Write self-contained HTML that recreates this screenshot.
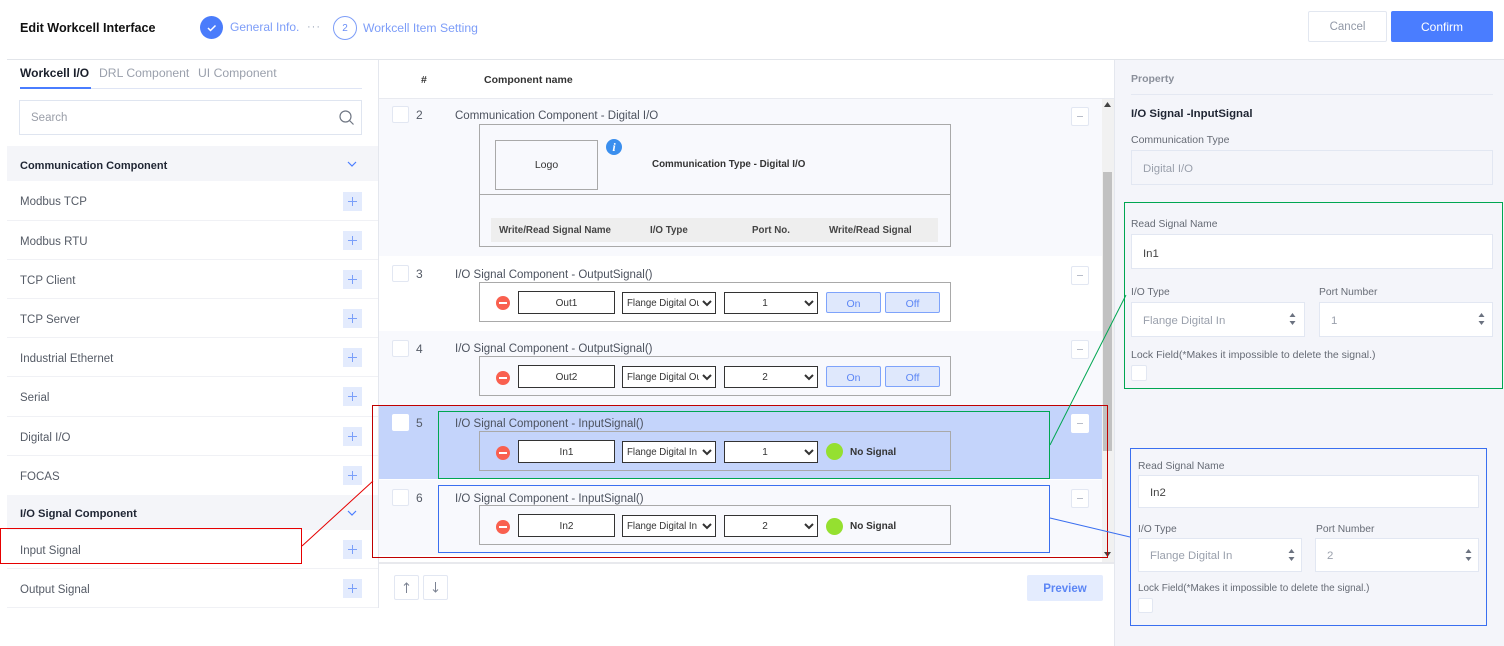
<!DOCTYPE html>
<html><head><meta charset="utf-8"><style>
html,body{margin:0;padding:0;background:#fff}
body{position:relative;width:1504px;height:646px;overflow:hidden;font-family:"Liberation Sans","Noto Sans CJK KR",sans-serif;font-size:11.5px;color:#555b66}
div,select,svg{position:absolute;box-sizing:border-box}
.t{height:16px;line-height:16px;white-space:nowrap}
.b{font-weight:bold;color:#1f2533}
.plus{left:343px;width:19px;height:19px;background:#e3ebfd}
.plus:before{content:"";position:absolute;left:5px;top:9px;width:9px;height:1px;background:#7a9ffa}
.plus:after{content:"";position:absolute;left:9px;top:5px;width:1px;height:9px;background:#7a9ffa}
.ln{left:7px;width:371px;height:1px;background:#f0f1f5}
.li{left:20px;color:#555b66;margin-top:1px}
.cb{left:392px;width:17px;height:17px;background:#fff;border:1px solid #e2e7f2;border-radius:2px}
.mn{left:1071px;width:18px;height:19px;background:#fff;border:1px solid #e2e7f2;border-radius:2px}
.mn:after{content:"";position:absolute;left:5px;top:8px;width:6px;height:1px;background:#b8bdc9}
.num{left:416px;font-size:12px}
.rt{left:455px;color:#4c525e;margin-top:1px}
.box{left:479px;width:472px;height:40px;border:1px solid #a9a9a9}
.red{left:496px;width:14px;height:14px;border-radius:50%;background:#f9604f}
.red:after{content:"";position:absolute;left:3px;top:6px;width:8px;height:2px;background:#fff}
.in{left:518px;width:97px;height:23px;border:1px solid #333;background:#fff;text-align:center;line-height:24px;font-size:10px;color:#333}
select{height:22px;background:#fff;border:1px solid #333;border-radius:0;font-family:"Liberation Sans",sans-serif;font-size:9.7px;color:#333;padding:0}
.s1{left:622px;width:94px}
.s2{left:724px;width:94px;font-size:10px;text-align:center;text-align-last:center}
.on{width:55px;height:21px;background:#dfe8fc;border:1px solid #7ea3fb;border-radius:2px;color:#5c86f5;text-align:center;line-height:22px;font-size:10.5px}
.dot{left:826px;width:17px;height:17px;border-radius:50%;background:#95e030}
.ns{left:850px;font-size:10px;font-weight:bold;color:#333}
.lab{color:#666b75;font-size:10.3px;margin-top:1px}
.lk{color:#666b75;font-size:10.5px}
.field{background:#fff;border:1px solid #e2e7f2;line-height:37px;padding-left:11px;color:#9aa0ac;font-size:11.4px}
.sp{width:7px;height:12px}
.hd{font-size:10.5px;font-weight:bold;color:#333}
.th{font-size:9.75px;font-weight:bold;color:#444}
</style></head><body>

<div class="t b" style="left:20px;top:20px;font-size:12.6px;color:#111">Edit Workcell Interface</div>
<div style="left:200px;top:16px;width:23px;height:23px;border-radius:50%;background:#4a7cfb"></div>
<svg style="left:200px;top:16px" width="23" height="23"><path d="M8 12l2.500 2.500L15.500 9.500" fill="none" stroke="#fff" stroke-width="1.500"/></svg>
<div class="t" style="left:230px;top:19px;font-size:12px;color:#7d9df8">General Info.</div>
<div class="t" style="left:307px;top:19px;font-size:11px;color:#9aa5b8;letter-spacing:1px">···</div>
<div style="left:333px;top:16px;width:24px;height:24px;border-radius:50%;border:1px solid #7d9df8;color:#6a8ef7;text-align:center;line-height:23px;font-size:10px">2</div>
<div class="t" style="left:363px;top:20px;font-size:12.2px;color:#7d9df8">Workcell Item Setting</div>
<div style="left:1308px;top:11px;width:79px;height:31px;border:1px solid #e2e7f0;border-radius:2px;background:#fff;color:#9198a6;text-align:center;line-height:31px;font-size:11.5px">Cancel</div>
<div style="left:1391px;top:11px;width:102px;height:31px;border-radius:2px;background:#4a7dff;color:#fff;text-align:center;line-height:33px;font-size:12px">Confirm</div>
<div style="left:7px;top:59px;width:1497px;height:1px;background:#e2e5ea"></div>

<div class="t b" style="left:20px;top:65px;color:#1a1f2b;font-size:12px">Workcell I/O</div>
<div class="t" style="left:99px;top:65px;color:#9aa0ac;font-size:12.2px">DRL Component</div>
<div class="t" style="left:198px;top:65px;color:#9aa0ac;font-size:12.2px">UI Component</div>
<div style="left:20px;top:88px;width:342px;height:1px;background:#dfe5f5"></div>
<div style="left:20px;top:87px;width:71px;height:2px;background:#4a7dff"></div>
<div style="left:19px;top:100px;width:343px;height:35px;border:1px solid #dfe5f0"></div>
<div class="t" style="left:31px;top:110px;color:#9a9ea8">Search</div>
<svg style="left:338px;top:109px" width="17" height="17"><circle cx="7.500" cy="7.500" r="5.500" fill="none" stroke="#707784" stroke-width="1.200"/><path d="M11.500 11.500l4 4" stroke="#707784" stroke-width="1.200"/></svg>

<div style="left:7px;top:146px;width:371px;height:35px;background:#f4f5f9"></div>
<div class="t b" style="left:20px;top:158px;font-size:11px">Communication Component</div>
<svg style="left:347px;top:161px" width="10" height="7"><path d="M1 1l4 4 4-4" fill="none" stroke="#4a7dff" stroke-width="1.200"/></svg>

<div class="t li" style="top:193px">Modbus TCP</div><div class="plus" style="top:192px"></div><div class="ln" style="top:220px"></div>
<div class="t li" style="top:233px">Modbus RTU</div><div class="plus" style="top:231px"></div><div class="ln" style="top:259px"></div>
<div class="t li" style="top:272px">TCP Client</div><div class="plus" style="top:270px"></div><div class="ln" style="top:298px"></div>
<div class="t li" style="top:311px">TCP Server</div><div class="plus" style="top:309px"></div><div class="ln" style="top:337px"></div>
<div class="t li" style="top:350px">Industrial Ethernet</div><div class="plus" style="top:348px"></div><div class="ln" style="top:376px"></div>
<div class="t li" style="top:389px">Serial</div><div class="plus" style="top:387px"></div><div class="ln" style="top:416px"></div>
<div class="t li" style="top:429px">Digital I/O</div><div class="plus" style="top:427px"></div><div class="ln" style="top:455px"></div>
<div class="t li" style="top:468px">FOCAS</div><div class="plus" style="top:466px"></div>

<div style="left:7px;top:495px;width:371px;height:35px;background:#f4f5f9"></div>
<div class="t b" style="left:20px;top:506px;font-size:11.2px">I/O Signal Component</div>
<svg style="left:347px;top:510px" width="10" height="7"><path d="M1 1l4 4 4-4" fill="none" stroke="#4a7dff" stroke-width="1.200"/></svg>
<div class="t li" style="top:542px">Input Signal</div><div class="plus" style="top:540px"></div><div class="ln" style="top:568px"></div>
<div class="t li" style="top:581px">Output Signal</div><div class="plus" style="top:579px"></div><div class="ln" style="top:607px"></div>
<div style="left:378px;top:60px;width:1px;height:548px;background:#e4e7ee"></div>

<div class="t hd" style="left:421px;top:72px">#</div>
<div class="t hd" style="left:484px;top:72px">Component name</div>
<div style="left:379px;top:98px;width:735px;height:1px;background:#e8eaf0"></div>

<div style="left:379px;top:99px;width:723px;height:157px;background:#f8f9fd"></div>
<div style="left:379px;top:331px;width:723px;height:75px;background:#f8f9fd"></div>
<div style="left:379px;top:406px;width:723px;height:73px;background:#c4d4fb"></div>
<div style="left:379px;top:480px;width:723px;height:75px;background:#f8f9fd"></div>
<div style="left:1102px;top:99px;width:12px;height:463px;background:#f1f1f1"></div>
<div style="left:1103px;top:172px;width:9px;height:279px;background:#c1c1c1"></div>
<svg style="left:1104px;top:102px" width="7" height="5"><path d="M0 5l3.500-5L7 5z" fill="#444"/></svg>
<svg style="left:1104px;top:552px" width="7" height="5"><path d="M0 0l3.500 5L7 0z" fill="#444"/></svg>
<div style="left:379px;top:562px;width:735px;height:2px;background:#e8e9ed"></div>

<div class="cb" style="top:106px"></div><div class="t num" style="top:107px">2</div>
<div class="t rt" style="top:107px">Communication Component - Digital I/O</div><div class="mn" style="top:107px"></div>
<div style="left:479px;top:124px;width:472px;height:123px;border:1px solid #a9a9a9"></div>
<div style="left:480px;top:194px;width:470px;height:1px;background:#a9a9a9"></div>
<div style="left:495px;top:140px;width:103px;height:50px;border:1px solid #a9a9a9;text-align:center;line-height:49px;font-size:10.5px;color:#333">Logo</div>
<div style="left:606px;top:139px;width:16px;height:16px;border-radius:50%;background:#3b8fee;color:#fff;text-align:center;font:italic bold 12px/16px 'Liberation Serif',serif">i</div>
<div class="t" style="left:652px;top:157px;font-size:9.8px;font-weight:bold;color:#333">Communication Type - Digital I/O</div>
<div style="left:491px;top:218px;width:447px;height:24px;background:#eeeeee"></div>
<div class="t th" style="left:499px;top:223px">Write/Read Signal Name</div>
<div class="t th" style="left:650px;top:223px">I/O Type</div>
<div class="t th" style="left:752px;top:223px">Port No.</div>
<div class="t th" style="left:829px;top:223px">Write/Read Signal</div>

<div class="cb" style="top:265px"></div><div class="t num" style="top:266px">3</div>
<div class="t rt" style="top:266px">I/O Signal Component - OutputSignal()</div><div class="mn" style="top:266px"></div>
<div class="box" style="top:282px"></div><div class="red" style="top:296px"></div>
<div class="in" style="top:291px">Out1</div>
<select class="s1" style="top:292px"><option>Flange Digital Out</option></select>
<select class="s2" style="top:292px"><option>1</option></select>
<div class="on" style="left:826px;top:292px">On</div><div class="on" style="left:885px;top:292px">Off</div>

<div class="cb" style="top:340px"></div><div class="t num" style="top:341px">4</div>
<div class="t rt" style="top:340px">I/O Signal Component - OutputSignal()</div><div class="mn" style="top:340px"></div>
<div class="box" style="top:356px"></div><div class="red" style="top:371px"></div>
<div class="in" style="top:365px">Out2</div>
<select class="s1" style="top:366px"><option>Flange Digital Out</option></select>
<select class="s2" style="top:366px"><option>2</option></select>
<div class="on" style="left:826px;top:366px">On</div><div class="on" style="left:885px;top:366px">Off</div>

<div class="cb" style="top:414px;border-color:#fff"></div><div class="t num" style="top:415px">5</div>
<div class="t rt" style="top:415px">I/O Signal Component - InputSignal()</div><div class="mn" style="top:414px;border-color:#fff"></div>
<div class="box" style="top:431px"></div><div class="red" style="top:446px"></div>
<div class="in" style="top:440px">In1</div>
<select class="s1" style="top:441px"><option>Flange Digital In I</option></select>
<select class="s2" style="top:441px"><option>1</option></select>
<div class="dot" style="top:443px"></div><div class="t ns" style="top:445px">No Signal</div>

<div class="cb" style="top:489px"></div><div class="t num" style="top:490px">6</div>
<div class="t rt" style="top:490px">I/O Signal Component - InputSignal()</div><div class="mn" style="top:489px"></div>
<div class="box" style="top:505px"></div><div class="red" style="top:520px"></div>
<div class="in" style="top:514px">In2</div>
<select class="s1" style="top:515px"><option>Flange Digital In I</option></select>
<select class="s2" style="top:515px"><option>2</option></select>
<div class="dot" style="top:518px"></div><div class="t ns" style="top:519px">No Signal</div>

<div style="left:394px;top:575px;width:25px;height:25px;border:1px solid #e2e7f2;border-radius:2px"></div>
<svg style="left:402px;top:582px" width="9" height="11"><path d="M4.500 11V1M2 3.500l2.500-2.500 2.500 2.500" fill="none" stroke="#7b8292" stroke-width="1"/></svg>
<div style="left:423px;top:575px;width:25px;height:25px;border:1px solid #e2e7f2;border-radius:2px"></div>
<svg style="left:431px;top:582px" width="9" height="11"><path d="M4.500 0V10M2 7.500l2.500 2.500 2.500-2.500" fill="none" stroke="#7b8292" stroke-width="1"/></svg>
<div style="left:1027px;top:575px;width:76px;height:26px;background:#e4ecfe;border-radius:2px;color:#5c86f5;font-weight:bold;text-align:center;line-height:28px;font-size:11.5px">Preview</div>

<div style="left:1114px;top:60px;width:390px;height:586px;background:#f4f5fa;border-left:1px solid #e4e7ee"></div>
<div class="t" style="left:1131px;top:71px;font-size:10.5px;font-weight:bold;color:#8a8f9a">Property</div>
<div style="left:1131px;top:94px;width:362px;height:1px;background:#e4e8f2"></div>
<div class="t b" style="left:1131px;top:106px;font-size:11.4px">I/O Signal -InputSignal</div>
<div class="t lab" style="left:1131px;top:131px;font-size:10.5px">Communication Type</div>
<div class="field" style="left:1131px;top:150px;width:362px;height:35px;background:#f4f5fa">Digital I/O</div>

<div class="t lab" style="left:1131px;top:216px">Read Signal Name</div>
<div class="field" style="left:1131px;top:234px;width:362px;height:35px;color:#444;line-height:38px">In1</div>
<div class="t lab" style="left:1131px;top:284px">I/O Type</div>
<div class="t lab" style="left:1319px;top:284px">Port Number</div>
<div class="field" style="left:1131px;top:302px;width:174px;height:35px">Flange Digital In</div>
<div class="field" style="left:1319px;top:302px;width:174px;height:35px">1</div>
<svg class="sp" style="left:1289px;top:313px"><path d="M3.500 0L6.500 4H.5zM3.500 12L.5 8h6z" fill="#6b7280"/></svg>
<svg class="sp" style="left:1478px;top:313px"><path d="M3.500 0L6.500 4H.5zM3.500 12L.5 8h6z" fill="#6b7280"/></svg>
<div class="t lk" style="left:1131px;top:347px">Lock Field(*Makes it impossible to delete the signal.)</div>
<div style="left:1131px;top:365px;width:16px;height:16px;background:#fff;border:1px solid #e2e7f2;border-radius:2px"></div>

<div class="t lab" style="left:1138px;top:458px">Read Signal Name</div>
<div class="field" style="left:1138px;top:475px;width:341px;height:33px;color:#444;line-height:35px">In2</div>
<div class="t lab" style="left:1138px;top:521px">I/O Type</div>
<div class="t lab" style="left:1316px;top:521px">Port Number</div>
<div class="field" style="left:1138px;top:538px;width:164px;height:34px;line-height:34px">Flange Digital In</div>
<div class="field" style="left:1315px;top:538px;width:164px;height:34px;line-height:34px">2</div>
<svg class="sp" style="left:1288px;top:549px"><path d="M3.500 0L6.500 4H.5zM3.500 12L.5 8h6z" fill="#6b7280"/></svg>
<svg class="sp" style="left:1465px;top:549px"><path d="M3.500 0L6.500 4H.5zM3.500 12L.5 8h6z" fill="#6b7280"/></svg>
<div class="t lk" style="left:1138px;top:581px;font-size:9.95px">Lock Field(*Makes it impossible to delete the signal.)</div>
<div style="left:1138px;top:598px;width:15px;height:15px;background:#fff;border:1px solid #e2e7f2;border-radius:2px"></div>

<div style="left:0;top:528px;width:302px;height:36px;border:1px solid #e60000"></div>
<div style="left:372px;top:405px;width:736px;height:153px;border:1px solid #c00000"></div>
<div style="left:438px;top:411px;width:612px;height:68px;border:1px solid #00a651"></div>
<div style="left:438px;top:485px;width:612px;height:68px;border:1px solid #3a6ff0"></div>
<div style="left:1124px;top:202px;width:379px;height:187px;border:1px solid #00a651"></div>
<div style="left:1130px;top:448px;width:357px;height:178px;border:1px solid #3a6ff0"></div>
<svg style="left:0;top:0" width="1504" height="646"><path d="M302 546L373 481" stroke="#e60000" fill="none"/><path d="M1050 445L1126 295" stroke="#00a651" fill="none"/><path d="M1050 518L1130 537" stroke="#3a6ff0" fill="none"/></svg>
</body></html>
